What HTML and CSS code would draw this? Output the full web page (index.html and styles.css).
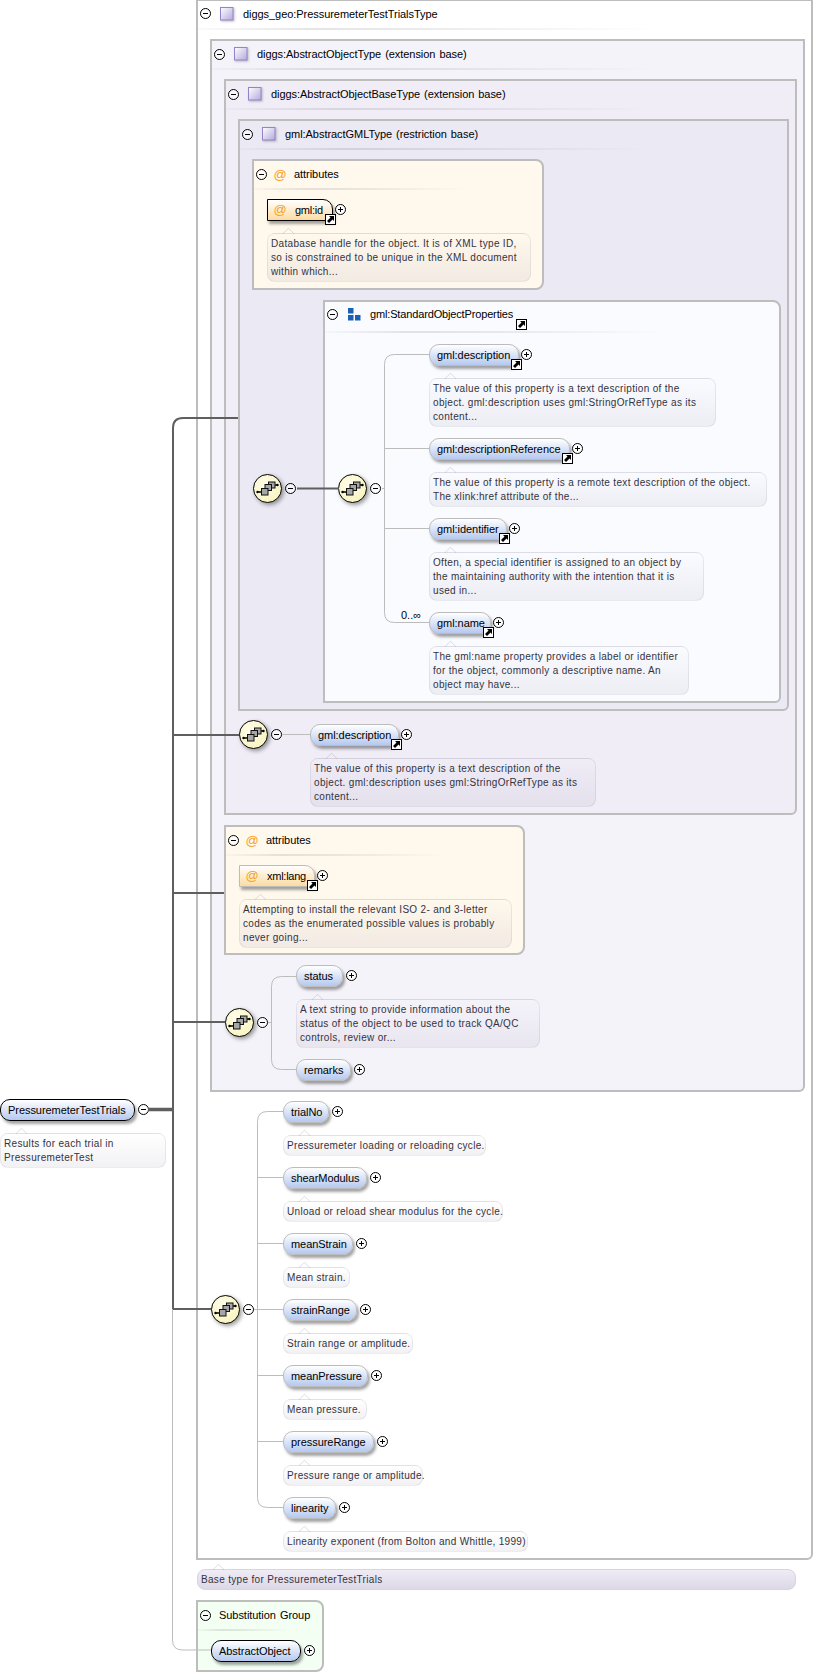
FILE: index.html
```html
<!DOCTYPE html>
<html lang="en">
<head>
<meta charset="utf-8">
<title>PressuremeterTestTrials</title>
<link rel="stylesheet" href="styles.css">
</head>
<body>
<svg class="defs" aria-hidden="true">
  <defs>
    <linearGradient id="tg" x1="0" y1="0" x2="1" y2="1"><stop offset="0" stop-color="#ffffff"/><stop offset="1" stop-color="#b4a9dc"/></linearGradient>
    <radialGradient id="cg" cx=".4" cy=".35" r=".75"><stop offset="0" stop-color="#fffdeb"/><stop offset="1" stop-color="#f8f3bb"/></radialGradient>
    <symbol id="minus" viewBox="0 0 11 11"><circle cx="5.5" cy="5.5" r="5" fill="#fff" fill-opacity=".6" stroke="#000"/><path d="M3 5.5H8" stroke="#000"/></symbol>
    <symbol id="plus" viewBox="0 0 11 11"><circle cx="5.5" cy="5.5" r="5" fill="#fff" stroke="#000"/><path d="M3 5.5H8M5.5 3V8" stroke="#000"/></symbol>
    <symbol id="link" viewBox="0 0 11 11"><rect x=".5" y=".5" width="10" height="10" fill="#fff" stroke="#000"/><path d="M4 2H9V7L7.5 5.5 4 9 2 7 5.5 3.5Z" fill="#000"/></symbol>
    <symbol id="type" viewBox="0 0 14 14"><rect x=".5" y=".5" width="12.5" height="12.5" fill="url(#tg)" stroke="#9683c9"/></symbol>
    <symbol id="seq" viewBox="0 0 13 13"><path d="M0 0H5.500V5.500H0ZM0 7H5.500V12.500H0ZM7 7H12.500V12.500H7Z" fill="#1b62b7"/></symbol>
    <symbol id="choice" viewBox="0 0 29 29">
      <circle cx="14.500" cy="14.500" r="14" fill="url(#cg)" stroke="#000"/>
      <path d="M4 18H9M21 11H25" stroke="#000" stroke-width="1.400"/>
      <circle cx="4.500" cy="18" r="1.200" fill="#000"/><circle cx="24.500" cy="11" r="1.200" fill="#000"/>
      <rect x="15.500" y="8" width="6.500" height="6" fill="#a6a6a6" stroke="#111"/>
      <rect x="12" y="10.500" width="6.500" height="6" fill="#a6a6a6" stroke="#111"/>
      <rect x="8.500" y="14.500" width="6.500" height="6.500" fill="#a6a6a6" stroke="#111"/>
    </symbol>
  </defs>
</svg>

<main class="canvas">
  <section class="root-col">
    <div class="item">
      <div class="row">
        <div class="node strong w135">PressuremeterTestTrials</div>
        <svg class="toggle after"><use href="#minus"/></svg>
      </div>
      <p class="desc w166">Results for each trial in<br>PressuremeterTest</p>
    </div>
  </section>

  <section class="type-col">
    <div class="box b1">
      <header class="hd hd-short"><svg class="toggle"><use href="#minus"/></svg><svg class="type-ic"><use href="#type"/></svg><span>diggs_geo:PressuremeterTestTrialsType</span></header>
      <div class="rule"></div>

      <div class="box b2 nest">
        <header class="hd"><svg class="toggle"><use href="#minus"/></svg><svg class="type-ic"><use href="#type"/></svg><span>diggs:AbstractObjectType (extension base)</span></header>
        <div class="rule"></div>

        <div class="box b3 nest">
          <header class="hd"><svg class="toggle"><use href="#minus"/></svg><svg class="type-ic"><use href="#type"/></svg><span>diggs:AbstractObjectBaseType (extension base)</span></header>
          <div class="rule"></div>

          <div class="box b4 nest">
            <header class="hd"><svg class="toggle"><use href="#minus"/></svg><svg class="type-ic"><use href="#type"/></svg><span>gml:AbstractGMLType (restriction base)</span></header>
            <div class="rule"></div>

            <div class="attrs a1">
              <header class="hd"><svg class="toggle"><use href="#minus"/></svg><span class="at">@</span><span>attributes</span></header>
              <div class="rule"></div>
              <div class="item">
                <div class="row">
                  <div class="node attr strong w66"><span class="at">@</span>gml:id<svg class="link"><use href="#link"/></svg></div>
                  <svg class="toggle after linked"><use href="#plus"/></svg>
                </div>
                <p class="desc w264">Database handle for the object. It is of XML type ID,<br>so is constrained to be unique in the XML document<br>within which...</p>
              </div>
            </div>

            <div class="choice c-std">
              <div class="compositor m174"><svg class="circle"><use href="#choice"/></svg><svg class="toggle"><use href="#minus"/></svg></div>
              <div class="props">
                <header class="hd hd-short"><svg class="toggle"><use href="#minus"/></svg><svg class="seq-ic"><use href="#seq"/></svg><span class="std-title">gml:StandardObjectProperties<svg class="link"><use href="#link"/></svg></span></header>
                <div class="rule rule-std"></div>
                <div class="choice">
                  <div class="compositor m130"><svg class="circle"><use href="#choice"/></svg><svg class="toggle"><use href="#minus"/></svg></div>
                  <div class="list l48">
                    <div class="item">
                      <div class="row"><div class="node w90">gml:description<svg class="link"><use href="#link"/></svg></div><svg class="toggle after linked"><use href="#plus"/></svg></div>
                      <p class="desc w287">The value of this property is a text description of the<br>object. gml:description uses gml:StringOrRefType as its<br>content...</p>
                    </div>
                    <div class="item">
                      <div class="row"><div class="node w141">gml:descriptionReference<svg class="link"><use href="#link"/></svg></div><svg class="toggle after linked"><use href="#plus"/></svg></div>
                      <p class="desc w338">The value of this property is a remote text description of the object.<br>The xlink:href attribute of the...</p>
                    </div>
                    <div class="item">
                      <div class="row"><div class="node w78">gml:identifier<svg class="link"><use href="#link"/></svg></div><svg class="toggle after linked"><use href="#plus"/></svg></div>
                      <p class="desc w275">Often, a special identifier is assigned to an object by<br>the maintaining authority with the intention that it is<br>used in...</p>
                    </div>
                    <div class="item">
                      <div class="row"><span class="occurs">0..∞</span><div class="node w62">gml:name<svg class="link"><use href="#link"/></svg></div><svg class="toggle after linked"><use href="#plus"/></svg></div>
                      <p class="desc w260">The gml:name property provides a label or identifier<br>for the object, commonly a descriptive name. An<br>object may have...</p>
                    </div>
                  </div>
                </div>
              </div>
            </div>
          </div>

          <div class="choice c-desc">
            <div class="compositor"><svg class="circle"><use href="#choice"/></svg><svg class="toggle"><use href="#minus"/></svg></div>
            <div class="list l28 m4">
              <div class="item">
                <div class="row"><div class="node w89">gml:description<svg class="link"><use href="#link"/></svg></div><svg class="toggle after linked"><use href="#plus"/></svg></div>
                <p class="desc w286">The value of this property is a text description of the<br>object. gml:description uses gml:StringOrRefType as its<br>content...</p>
              </div>
            </div>
          </div>
        </div>

        <div class="attrs a2">
          <header class="hd"><svg class="toggle"><use href="#minus"/></svg><span class="at">@</span><span>attributes</span></header>
          <div class="rule"></div>
          <div class="item">
            <div class="row"><div class="node attr w76"><span class="at">@</span>xml:lang<svg class="link"><use href="#link"/></svg></div><svg class="toggle after linked"><use href="#plus"/></svg></div>
            <p class="desc w273">Attempting to install the relevant ISO 2- and 3-letter<br>codes as the enumerated possible values is probably<br>never going...</p>
          </div>
        </div>

        <div class="choice c-status">
          <div class="compositor m43"><svg class="circle"><use href="#choice"/></svg><svg class="toggle"><use href="#minus"/></svg></div>
          <div class="list l28">
            <div class="item">
              <div class="row"><div class="node w47">status</div><svg class="toggle after"><use href="#plus"/></svg></div>
              <p class="desc w244">A text string to provide information about the<br>status of the object to be used to track QA/QC<br>controls, review or...</p>
            </div>
            <div class="item">
              <div class="row"><div class="node w55">remarks</div><svg class="toggle after"><use href="#plus"/></svg></div>
            </div>
          </div>
        </div>
      </div>

      <div class="choice c-trials">
        <div class="compositor m194"><svg class="circle"><use href="#choice"/></svg><svg class="toggle"><use href="#minus"/></svg></div>
        <div class="list l29">
          <div class="item">
            <div class="row"><div class="node w46">trialNo</div><svg class="toggle after"><use href="#plus"/></svg></div>
            <p class="desc w203">Pressuremeter loading or reloading cycle.</p>
          </div>
          <div class="item">
            <div class="row"><div class="node w84">shearModulus</div><svg class="toggle after"><use href="#plus"/></svg></div>
            <p class="desc w220">Unload or reload shear modulus for the cycle.</p>
          </div>
          <div class="item">
            <div class="row"><div class="node w70">meanStrain</div><svg class="toggle after"><use href="#plus"/></svg></div>
            <p class="desc w67">Mean strain.</p>
          </div>
          <div class="item">
            <div class="row"><div class="node w74">strainRange</div><svg class="toggle after"><use href="#plus"/></svg></div>
            <p class="desc w130">Strain range or amplitude.</p>
          </div>
          <div class="item">
            <div class="row"><div class="node w85">meanPressure</div><svg class="toggle after"><use href="#plus"/></svg></div>
            <p class="desc w84">Mean pressure.</p>
          </div>
          <div class="item">
            <div class="row"><div class="node w91">pressureRange</div><svg class="toggle after"><use href="#plus"/></svg></div>
            <p class="desc w140">Pressure range or amplitude.</p>
          </div>
          <div class="item">
            <div class="row"><div class="node w53">linearity</div><svg class="toggle after"><use href="#plus"/></svg></div>
            <p class="desc w245">Linearity exponent (from Bolton and Whittle, 1999)</p>
          </div>
        </div>
      </div>
    </div>

    <p class="desc base w599">Base type for PressuremeterTestTrials</p>

    <div class="subst">
      <header class="hd"><svg class="toggle"><use href="#minus"/></svg><span class="subst-title">Substitution Group</span></header>
      <div class="rule"></div>
      <div class="row"><div class="node strong w90">AbstractObject</div><svg class="toggle after"><use href="#plus"/></svg></div>
    </div>
  </section>

  <svg class="wires" width="814" height="1674" aria-hidden="true">
    <g class="thick">
      <path d="M238 418H183Q173 418 173 428V1309H211"/>
      <path d="M173 735H239M173 893H224M173 1022H225M297 488.500H339"/>
      <path class="trunk" d="M148 1109.500H173"/>
    </g>
    <g class="thin">
      <path d="M172.500 1309V1640Q172.500 1650 182.500 1650H211"/>
      <path d="M382 488.500H384.500M429 354.500H394.500Q384.500 354.500 384.500 364.500V612.500Q384.500 622.500 394.500 622.500H429M384.500 448.500H429M384.500 528.500H429"/>
      <path d="M282 734.500H310"/>
      <path d="M268 1022.500H271.500M296 976.500H281.500Q271.500 976.500 271.500 986.500V1059.500Q271.500 1069.500 281.500 1069.500H296"/>
      <path d="M254 1309.500H257.500M283 1111.500H267.500Q257.500 1111.500 257.500 1121.500V1497.500Q257.500 1507.500 267.500 1507.500H283M257.500 1177.500H283M257.500 1243.500H283M257.500 1309.500H283M257.500 1375.500H283M257.500 1441.500H283"/>
    </g>
  </svg>
</main>
</body>
</html>
```

FILE: styles.css
```css
* { box-sizing: border-box; }
html, body { margin: 0; padding: 0; background: #fff; }
body {
  font-family: "Liberation Sans", Arial, sans-serif;
  font-size: 11px;
  color: #000;
}
.defs { position: absolute; width: 0; height: 0; }

.canvas {
  position: relative;
  width: 814px;
  height: 1674px;
  overflow: hidden;
  display: grid;
  grid-template-columns: 196px 617px;
  align-items: start;
}
.root-col { margin-top: 1099px; }
.type-col { display: flex; flex-direction: column; align-items: flex-start; }

.wires { position: absolute; left: 0; top: 0; pointer-events: none; }
.wires path { fill: none; }
.thick path { stroke: #5f5f5f; stroke-width: 2; }
.thick .trunk { stroke-width: 3.5; }
.thin path { stroke: #bcbcbc; stroke-width: 1; }

/* Nested type boxes */
.box {
  border: 2px solid #bdbdbd;
  border-radius: 0 0 6px 0;
}
.nest { margin: 0 6px 0 12px; }
.b1 { width: 617px; height: 1561px; margin-top: -1px; background: #fff; }
.b2 { background: #f5f3fa; }
.b3 { background: #f0edf7; }
.b4 { background: #ebe9f4; }

.hd {
  display: flex;
  align-items: center;
  height: 26px;
  padding-left: 2px;
  white-space: nowrap;
  letter-spacing: -.05px;
  word-spacing: 1px;
}
.hd-short { height: 24px; }
.b1 > .hd-short { height: 25px; }
.rule {
  width: 75%;
  height: 2px;
  margin: 1px 0 9px;
  background: linear-gradient(90deg, rgba(0,0,0,.02), rgba(0,0,0,.1) 25%, rgba(0,0,0,.08) 50%, rgba(0,0,0,0));
}
.hd-short + .rule { margin-top: 2px; }
.hd-short + .rule-std { margin: 5px 0 11px; }

.toggle { flex: none; width: 11px; height: 11px; display: block; }
.type-ic { flex: none; width: 14px; height: 14px; margin: 0 9px; filter: drop-shadow(1px 1px 1px rgba(0,0,0,.25)); }
.seq-ic { flex: none; width: 13px; height: 13px; margin: 0 9px 0 10px; }
.at {
  flex: none;
  color: #f5a020;
  font-size: 13px;
  width: 14px;
  margin: 0 7px 0 6px;
  text-align: center;
}

/* Attribute groups */
.attrs {
  border: 2px solid #bdbdbd;
  border-radius: 0 8px 8px 0;
  background: #fff8ed;
  margin-left: 12px;
}
.a1 { width: 292px; height: 131px; }
.a2 { width: 301px; height: 130px; margin-top: 10px; }
.attrs .item { margin-left: 13px; }

/* Compositor rows */
.choice { display: flex; align-items: flex-start; padding-left: 13px; }
.compositor { flex: none; display: flex; align-items: center; gap: 3px; height: 29px; }
.circle { flex: none; width: 29px; height: 29px; display: block; filter: drop-shadow(2px 2px 2px rgba(0,0,0,.4)); overflow: visible; }
.m43 { margin-top: 43px; }
.m130 { margin-top: 130px; }
.m174 { margin-top: 174px; }
.m194 { margin-top: 194px; }
.list { display: flex; flex-direction: column; gap: 11px; }
.l28 { margin-left: 28px; }
.l29 { margin-left: 29px; }
.l48 { margin-left: 48px; }
.m4 { margin-top: 4px; }
.c-std { margin-top: 10px; padding-bottom: 6px; }
.c-desc { margin-top: 9px; padding-bottom: 6px; }
.c-status { margin-top: 10px; padding-bottom: 8px; }
.c-trials { margin-top: 9px; }

.props {
  flex: 1;
  margin: 0 6px 0 27px;
  border: 2px solid #bdbdbd;
  border-radius: 0 8px 6px 0;
  background: #fafbff;
  padding-bottom: 6px;
}
.std-title { position: relative; letter-spacing: -.15px; }
.std-title .link { right: -14px; bottom: -10px; }

/* Element nodes */
.row { position: relative; display: flex; align-items: flex-start; height: 23px; }
.node {
  position: relative;
  flex: none;
  height: 22px;
  line-height: 20px;
  padding-left: 7px;
  white-space: nowrap;
  letter-spacing: -.05px;
  border: 1px solid #bcbcbc;
  border-radius: 10px;
  background: linear-gradient(#ffffff, #b5c9ef);
  box-shadow: 2px 3px 3px rgba(0,0,0,.36);
}
.node.strong { border-color: #000; }
.node.attr {
  display: flex;
  padding-left: 0;
  letter-spacing: -.25px;
  border-radius: 0 10px 0 0;
  background: linear-gradient(#ffffff, #fcdba2);
}
.node.attr .at { line-height: 20px; margin: 0 8px 0 5px; }
.toggle.after { margin: 5px 0 0 3px; }
.toggle.linked { margin-left: 2px; }
.link {
  position: absolute;
  right: -4px;
  bottom: -5px;
  width: 11px;
  height: 11px;
  display: block;
}
.occurs {
  position: absolute;
  left: -28px;
  top: -4px;
  line-height: 14px;
}

/* Documentation bubbles */
.desc {
  position: relative;
  margin: 11px 0 0;
  padding: 3px 3px 2px;
  line-height: 14px;
  font-size: 10px;
  letter-spacing: .32px;
  color: #33333f;
  white-space: nowrap;
  border: 1px solid rgba(60,50,90,.09);
  border-radius: 8px;
  background: linear-gradient(rgba(70,60,100,0), rgba(70,60,100,.07));
}
.desc::before {
  content: "";
  position: absolute;
  left: 15px;
  top: -6px;
  width: 10px;
  height: 10px;
  transform: rotate(45deg) scale(.75);
  border-left: 1px solid rgba(60,50,90,.16);
  border-top: 1px solid rgba(60,50,90,.16);
}
.base { margin: 9px 0 0 1px; background: linear-gradient(#efecf6, #dcd8e6); border-color: #d8d4e2; }

/* Substitution group */
.subst {
  width: 128px;
  height: 72px;
  margin-top: 10px;
  border: 2px solid #bdbdbd;
  border-radius: 0 8px 8px 0;
  background: #f3fff3;
}
.subst .row { margin-left: 13px; }
.subst-title { margin-left: 8px; }

/* Explicit widths */
.w46 { width: 46px; } .w47 { width: 47px; } .w53 { width: 53px; } .w55 { width: 55px; }
.w62 { width: 62px; } .w66 { width: 66px; } .w67 { width: 67px; } .w70 { width: 70px; }
.w74 { width: 74px; } .w76 { width: 76px; } .w78 { width: 78px; } .w84 { width: 84px; }
.w85 { width: 85px; } .w89 { width: 89px; } .w90 { width: 90px; } .w91 { width: 91px; }
.w130 { width: 130px; } .w135 { width: 135px; } .w140 { width: 140px; } .w141 { width: 141px; }
.w166 { width: 166px; } .w203 { width: 203px; } .w220 { width: 220px; } .w244 { width: 244px; }
.w245 { width: 245px; } .w260 { width: 260px; } .w264 { width: 264px; } .w273 { width: 273px; }
.w275 { width: 275px; } .w286 { width: 286px; } .w287 { width: 287px; } .w338 { width: 338px; }
.w599 { width: 599px; }
```
